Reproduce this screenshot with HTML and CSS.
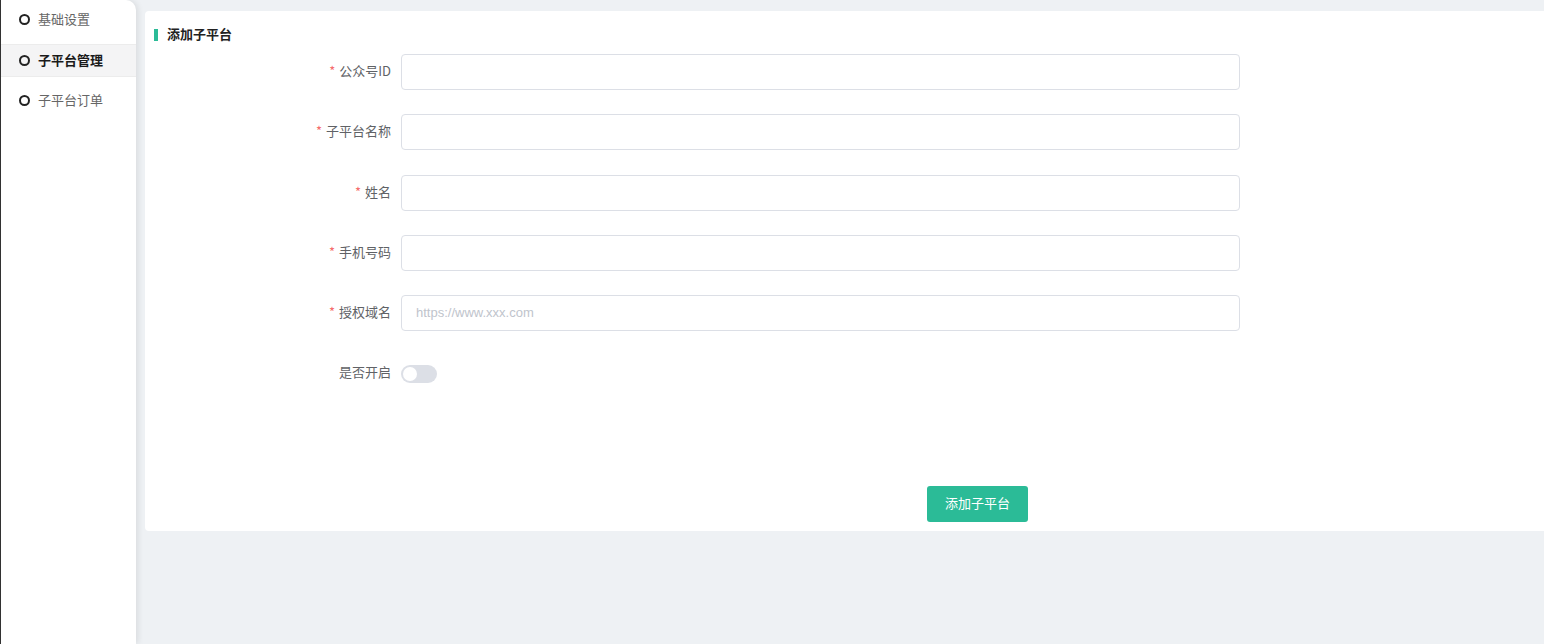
FILE: index.html
```html
<!DOCTYPE html>
<html lang="zh-CN">
<head>
<meta charset="utf-8">
<title>添加子平台</title>
<link rel="stylesheet" href="styles.css">
</head>
<body>
<div class="app">
  <aside class="sidebar">
    <div class="nav-item first"><span class="dot"></span><span class="nav-text">基础设置</span></div>
    <div class="nav-item active"><span class="dot"></span><span class="nav-text">子平台管理</span></div>
    <div class="nav-item last"><span class="dot"></span><span class="nav-text">子平台订单</span></div>
  </aside>
  <main class="main">
    <section class="card">
      <h2 class="card-title"><span class="bar"></span><span class="title-text">添加子平台</span></h2>
      <form class="form">
        <div class="row"><label class="label"><span class="req">*</span>公众号ID</label><input class="input" type="text"></div>
        <div class="row"><label class="label"><span class="req">*</span>子平台名称</label><input class="input" type="text"></div>
        <div class="row"><label class="label"><span class="req">*</span>姓名</label><input class="input" type="text"></div>
        <div class="row"><label class="label"><span class="req">*</span>手机号码</label><input class="input" type="text"></div>
        <div class="row"><label class="label"><span class="req">*</span>授权域名</label><input class="input" type="text" placeholder="https://www.xxx.com"></div>
        <div class="row"><label class="label">是否开启</label><span class="switch"><span class="knob"></span></span></div>
        <div class="actions"><button type="button" class="btn">添加子平台</button></div>
      </form>
    </section>
  </main>
</div>
</body>
</html>
```

FILE: styles.css
```css
* { box-sizing: border-box; }
html, body { margin: 0; padding: 0; height: 100%; }
body {
  font-family: "Noto Sans CJK SC", "Liberation Sans", sans-serif;
  font-size: 13px;
  background: #eef1f4;
  overflow: hidden;
}
.app {
  display: flex;
  height: 644px;
  border-left: 1px solid #333;
}
.sidebar {
  width: 135px;
  flex: none;
  background: #fff;
  border-top-right-radius: 10px;
  box-shadow: 2px 0 6px rgba(0, 0, 0, 0.09);
  position: relative;
  z-index: 1;
}
.nav-item {
  display: flex;
  align-items: center;
  height: 38px;
  padding-left: 18px;
  color: #666;
  font-size: 13px;
}
.nav-text { padding-bottom: 2px; }
.nav-item .dot {
  width: 11px;
  height: 11px;
  border: 2px solid #222;
  border-radius: 50%;
  margin-right: 8px;
  flex: none;
}
.nav-item.active {
  margin-top: 6px;
  height: 33px;
  background: #f4f4f5;
  border-top: 1px solid #ececec;
  border-bottom: 1px solid #ececec;
  color: #1a1a1a;
  font-weight: 700;
}
.nav-item.last { margin-top: 4px; }
.main {
  flex: 1;
  padding: 11px 0 0 9px;
  min-width: 0;
}
.card {
  background: #fff;
  border-radius: 4px 0 0 4px;
  height: 520px;
  padding: 17px 0 9px 9px;
}
.card-title {
  margin: 0;
  display: flex;
  align-items: center;
  font-size: 13px;
  font-weight: 700;
  color: #222;
  line-height: 14px;
  height: 14px;
}
.title-text { position: relative; top: -1px; }
.card-title .bar {
  width: 4px;
  height: 12px;
  background: #2bbb97;
  margin-right: 9px;
}
.form {
  margin-top: 12px;
}
.row {
  display: flex;
  align-items: center;
  height: 36px;
  margin-bottom: 24px;
}
.row:nth-child(2) { margin-bottom: 25px; }
.label {
  width: 247px;
  padding-right: 10px;
  padding-bottom: 3px;
  text-align: right;
  color: #606266;
  font-size: 13px;
  flex: none;
}
.req {
  color: #f56c6c;
  margin-right: 4px;
}
.input {
  width: 839px;
  height: 36px;
  border: 1px solid #dcdfe6;
  border-radius: 4px;
  padding: 0 14px 1px;
  font-family: "Liberation Sans", "Noto Sans CJK SC", sans-serif;
  font-size: 13px;
  color: #606266;
  outline: none;
  background: #fff;
}
.input::placeholder { color: #c0c4cc; }
.switch {
  position: relative;
  width: 36px;
  height: 18px;
  border-radius: 9px;
  background: #dcdfe6;
  margin-top: 2px;
}
.switch .knob {
  position: absolute;
  left: 2px;
  top: 2px;
  width: 14px;
  height: 14px;
  border-radius: 50%;
  background: #fff;
}
.actions {
  padding-top: 71px;
  padding-left: 773px;
}
.btn {
  width: 101px;
  height: 36px;
  border: none;
  border-radius: 3px;
  background: #2bbb97;
  color: #fff;
  font-family: "Noto Sans CJK SC", sans-serif;
  font-size: 13px;
  padding: 0 0 3px;
  cursor: pointer;
}
```
